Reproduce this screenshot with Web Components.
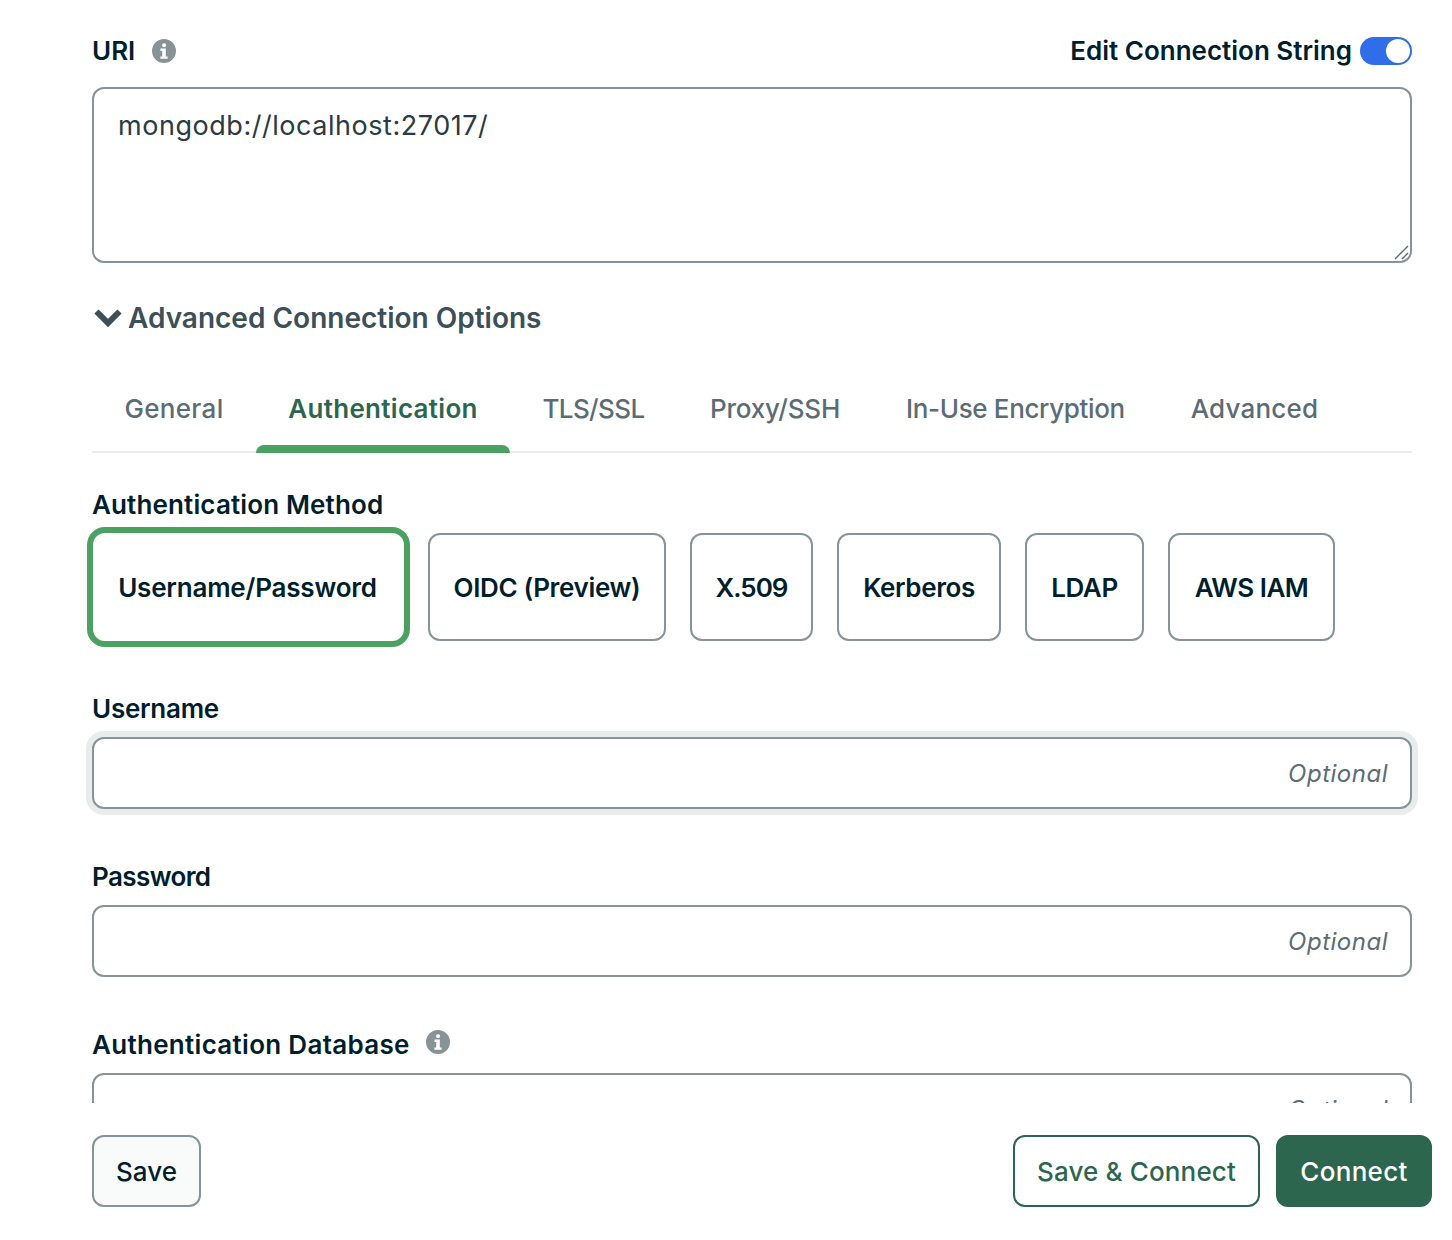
<!DOCTYPE html>
<html>
<head>
<meta charset="utf-8">
<title>Connection form</title>
<style>
html, body { margin: 0; padding: 0; background: #fff; }
body { font-family: Inter, "Liberation Sans", sans-serif; color: #001e2b; }
</style>
</head>
<body>
<connect-form></connect-form>

<script>
// small helper, every element below does the same thing in its constructor
function shadow(el, html) {
  el.attachShadow({ mode: "open" });
  el.shadowRoot.innerHTML = html;
}

class InfoIcon extends HTMLElement {
  constructor() {
    super();
    shadow(this, `
<style>
:host { display: inline-flex; width: 24px; height: 24px; }
svg { width: 24px; height: 24px; display: block; }
</style>
<svg viewBox="0 0 16 16"><path fill="#889397" fill-rule="evenodd" d="M8 16A8 8 0 1 0 8 0a8 8 0 0 0 0 16zM9.4 4.1a1.35 1.35 0 1 1-2.7 0 1.35 1.35 0 0 1 2.7 0zM5.6 6.4h3.6v5.2h1.2v1.6H5.6v-1.6h1.2V8H5.6z"/></svg>`);
  }
}

class FieldLabel extends HTMLElement {
  constructor() {
    super();
    shadow(this, `
<style>
:host { display: block; height: 28px; line-height: 28px; font-size: 26px; font-weight: 600; color: #001e2b; white-space: nowrap; letter-spacing: var(--ls, 0); }
</style>
<slot></slot>`);
  }
}

class ToggleSwitch extends HTMLElement {
  constructor() {
    super();
    shadow(this, `
<style>
:host { display: block; width: 52px; height: 28px; border-radius: 14px; background: #2f6ee8; position: relative; }
.knob { position: absolute; right: 2px; top: 2px; width: 24px; height: 24px; border-radius: 50%; background: #fff; }
</style>
<div class="knob"></div>`);
  }
}

class UriBox extends HTMLElement {
  constructor() {
    super();
    shadow(this, `
<style>
:host { display: block; position: relative; box-sizing: border-box; height: 176px; border: 2px solid #889397; border-radius: 12px; padding: 19px 24px; font-size: 27px; line-height: 36px; color: #2b3a44; letter-spacing: .54px; }
svg { position: absolute; right: 1px; bottom: 1px; width: 16px; height: 16px; }
</style>
<slot></slot>
<svg viewBox="0 0 16 16"><path d="M2 15 15 2M9 15l6-6" stroke="#5f6a70" stroke-width="1.4" fill="none"/></svg>`);
  }
}

class AdvancedToggle extends HTMLElement {
  constructor() {
    super();
    shadow(this, `
<style>
:host { display: flex; align-items: center; height: 40px; font-size: 28px; font-weight: 600; color: #3d4f58; white-space: nowrap; }
svg { width: 28px; height: 20px; margin: 0 7px 0 2px; flex: none; }
span { margin-left: -1px; }
</style>
<svg viewBox="0 0 28 20"><path d="M2.5 3.5 14 15 25.5 3.5" stroke="#3d4f58" stroke-width="6" fill="none"/></svg>
<span><slot></slot></span>`);
  }
}

class TabBar extends HTMLElement {
  constructor() {
    super();
    shadow(this, `
<style>
:host { display: flex; height: 88px; border-bottom: 2px solid #e8edeb; box-sizing: border-box; }
</style>
<slot></slot>`);
  }
}

class TabItem extends HTMLElement {
  constructor() {
    super();
    shadow(this, `
<style>
:host { display: flex; justify-content: center; align-items: center; position: relative; box-sizing: border-box; height: 88px; padding-bottom: 2px; margin-bottom: -2px; font-size: 26px; font-weight: 500; color: #5c6c75; white-space: nowrap; letter-spacing: var(--ls, 0); }
:host([active]) { color: #2d664f; font-weight: 600; }
.bar { display: none; position: absolute; left: 0; right: 0; bottom: 0; height: 8px; border-radius: 8px 8px 0 0; background: #4ba161; }
:host([active]) .bar { display: block; }
</style>
<slot></slot><div class="bar"></div>`);
  }
}

class MethodButton extends HTMLElement {
  constructor() {
    super();
    shadow(this, `
<style>
:host { display: flex; justify-content: center; align-items: center; box-sizing: border-box; height: 108px; border: 2px solid #889397; border-radius: 12px; font-size: 26px; font-weight: 600; color: #001e2b; white-space: nowrap; letter-spacing: var(--ls, 0); background: #fff; }
:host([selected]) { border-color: #4ba161; border-width: 6px; border-radius: 18px; margin: -6px -6px -6px -5px; padding-right: 2px; height: 120px; position: relative; }
</style>
<slot></slot>`);
  }
}

class TextField extends HTMLElement {
  constructor() {
    super();
    shadow(this, `
<style>
:host { display: flex; align-items: center; justify-content: flex-end; box-sizing: border-box; height: 72px; border: 2px solid #889397; border-radius: 12px; padding: 0 22px; background: #fff; }
:host([focused]) { box-shadow: 0 0 0 6px #e8edeb; }
.optional { font-size: 24px; font-style: italic; color: #5c6c75; letter-spacing: .5px; }
</style>
<span class="optional">Optional</span>`);
  }
}

class ActionButton extends HTMLElement {
  constructor() {
    super();
    shadow(this, `
<style>
:host { display: flex; justify-content: center; align-items: center; box-sizing: border-box; height: 72px; border: 2px solid #889397; border-radius: 12px; background: #f9fbfa; color: #001e2b; font-size: 26px; font-weight: 500; white-space: nowrap; letter-spacing: var(--ls, 0); }
:host([variant="outline"]) { background: #fff; border-color: #2d664f; color: #2d664f; }
:host([variant="primary"]) { background: #2d664f; border-color: #2d664f; color: #fff; }
</style>
<slot></slot>`);
  }
}

class ConnectForm extends HTMLElement {
  constructor() {
    super();
    shadow(this, `
<style>
:host { display: block; width: 1452px; height: 1240px; }
.scroll { box-sizing: border-box; height: 1103px; overflow: hidden; padding: 37px 40px 0 92px; }
.row { display: flex; align-items: center; }
.between { justify-content: space-between; }
.gap { gap: 17px; }
.right { gap: 8px; }
.uri { margin-top: 22px; }
.adv { margin-top: 35px; }
.tabs { margin-top: 27px; }
.methodLabel { margin-top: 38px; }
.methods { margin-top: 14px; gap: 24px; }
.fieldLabel { margin-top: 54px; }
.field { margin-top: 14px; }
.raised { margin-top: -6px; }
.footer { display: flex; align-items: flex-start; justify-content: space-between; height: 137px; box-sizing: border-box; padding: 32px 20px 0 92px; }
.footer .group { display: flex; gap: 16px; }
</style>
<div class="scroll">
  <div class="row between">
    <div class="row gap"><field-label>URI</field-label><info-icon></info-icon></div>
    <div class="row right"><field-label>Edit Connection String</field-label><toggle-switch></toggle-switch></div>
  </div>
  <uri-box class="uri">mongodb://localhost:27017/</uri-box>
  <advanced-toggle class="adv">Advanced Connection Options</advanced-toggle>
  <tab-bar class="tabs">
    <tab-item style="width:164px;--ls:.3px">General</tab-item>
    <tab-item style="width:254px;--ls:.3px" active>Authentication</tab-item>
    <tab-item style="width:167px;--ls:-.6px">TLS/SSL</tab-item>
    <tab-item style="width:196px;--ls:-.2px">Proxy/SSH</tab-item>
    <tab-item style="width:285px;--ls:-.35px">In-Use Encryption</tab-item>
    <tab-item style="width:193px;--ls:.2px">Advanced</tab-item>
  </tab-bar>
  <field-label class="methodLabel" style="--ls:.14px">Authentication Method</field-label>
  <div class="row methods">
    <method-button style="width:323px;--ls:-.2px" selected>Username/Password</method-button>
    <method-button style="width:238px;--ls:-.35px">OIDC (Preview)</method-button>
    <method-button style="width:123px;--ls:-1px">X.509</method-button>
    <method-button style="width:164px;--ls:-.4px">Kerberos</method-button>
    <method-button style="width:119px;--ls:-.4px">LDAP</method-button>
    <method-button style="width:167px;--ls:-.5px">AWS IAM</method-button>
  </div>
  <field-label class="fieldLabel" style="--ls:-.25px">Username</field-label>
  <text-field class="field" focused></text-field>
  <field-label class="fieldLabel" style="--ls:-.6px">Password</field-label>
  <text-field class="field"></text-field>
  <div class="row fieldLabel" style="gap:16px"><field-label style="--ls:.3px">Authentication Database</field-label><info-icon class="raised"></info-icon></div>
  <text-field class="field"></text-field>
</div>
<div class="footer">
  <action-button style="width:109px">Save</action-button>
  <div class="group">
    <action-button style="width:247px;--ls:.15px" variant="outline">Save &amp; Connect</action-button>
    <action-button style="width:156px;--ls:.3px" variant="primary">Connect</action-button>
  </div>
</div>`);
  }
}

customElements.define("info-icon", InfoIcon);
customElements.define("field-label", FieldLabel);
customElements.define("toggle-switch", ToggleSwitch);
customElements.define("uri-box", UriBox);
customElements.define("advanced-toggle", AdvancedToggle);
customElements.define("tab-bar", TabBar);
customElements.define("tab-item", TabItem);
customElements.define("method-button", MethodButton);
customElements.define("text-field", TextField);
customElements.define("action-button", ActionButton);
customElements.define("connect-form", ConnectForm);
</script>
</body>
</html>
